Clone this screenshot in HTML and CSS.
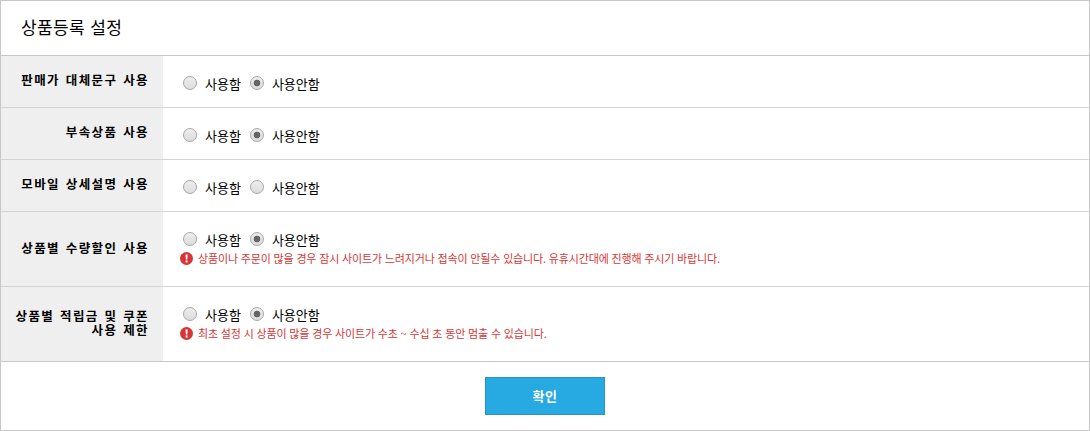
FILE: index.html
```html
<!DOCTYPE html>
<html lang="ko">
<head>
    <meta charset="UTF-8">
    <meta name="viewport" content="width=device-width, initial-scale=1.0">
    <title>상품등록 설정</title>
    <link rel="stylesheet" href="styles.css">
</head>
<body>
    <form class="setting">
        <h1>상품등록 설정</h1>
        <div class="row">
            <div class="name"><span class="text">판매가 대체문구 사용</span></div>
            <div class="value">
                <div class="radios">
                    <label><input type="radio" name="price_text" value="Y"><span>사용함</span></label>
                    <label><input type="radio" name="price_text" value="N" checked><span>사용안함</span></label>
                </div>
            </div>
        </div>
        <div class="row">
            <div class="name"><span class="text">부속상품 사용</span></div>
            <div class="value">
                <div class="radios">
                    <label><input type="radio" name="sub_goods" value="Y"><span>사용함</span></label>
                    <label><input type="radio" name="sub_goods" value="N" checked><span>사용안함</span></label>
                </div>
            </div>
        </div>
        <div class="row">
            <div class="name"><span class="text">모바일 상세설명 사용</span></div>
            <div class="value">
                <div class="radios">
                    <label><input type="radio" name="mobile_desc" value="Y"><span>사용함</span></label>
                    <label><input type="radio" name="mobile_desc" value="N"><span>사용안함</span></label>
                </div>
            </div>
        </div>
        <div class="row tall">
            <div class="name"><span class="text">상품별 수량할인 사용</span></div>
            <div class="value">
                <div class="radios">
                    <label><input type="radio" name="qty_sale" value="Y"><span>사용함</span></label>
                    <label><input type="radio" name="qty_sale" value="N" checked><span>사용안함</span></label>
                </div>
                <p class="notice">
                    <svg width="13" height="13" viewBox="0 0 13 13"><circle cx="6.5" cy="6.5" r="6.5" fill="#d63636"/><path d="M5.5 2.5h2.2l-.4 5H5.9zM5.6 8.6h2v2h-2z" fill="#fff"/></svg>
                    <span>상품이나 주문이 많을 경우 잠시 사이트가 느려지거나 접속이 안될수 있습니다. 유휴시간대에 진행해 주시기 바랍니다.</span>
                </p>
            </div>
        </div>
        <div class="row tall">
            <div class="name"><span class="text">상품별 적립금 및 쿠폰<br>사용 제한</span></div>
            <div class="value">
                <div class="radios">
                    <label><input type="radio" name="point_limit" value="Y"><span>사용함</span></label>
                    <label><input type="radio" name="point_limit" value="N" checked><span>사용안함</span></label>
                </div>
                <p class="notice">
                    <svg width="13" height="13" viewBox="0 0 13 13"><circle cx="6.5" cy="6.5" r="6.5" fill="#d63636"/><path d="M5.5 2.5h2.2l-.4 5H5.9zM5.6 8.6h2v2h-2z" fill="#fff"/></svg>
                    <span>최초 설정 시 상품이 많을 경우 사이트가 수초 ~ 수십 초 동안 멈출 수 있습니다.</span>
                </p>
            </div>
        </div>
        <div class="buttons">
            <button type="submit">확인</button>
        </div>
    </form>
</body>
</html>
```
FILE: styles.css
```css
* {
    box-sizing: border-box;
}
body {
    margin: 0;
    font-family: "Noto Sans CJK KR", sans-serif;
    font-size: 13px;
    color: #000;
    background: #fff;
}
.setting {
    height: 431px;
    border: 1px solid #c8c8c8;
    overflow: hidden;
    white-space: nowrap;
}
h1 {
    height: 55px;
    margin: 0;
    padding-left: 20px;
    border-bottom: 1px solid #c8c8c8;
    font-size: 17px;
    font-weight: 400;
    line-height: 52px;
    letter-spacing: 0.4px;
}
.row {
    display: flex;
    height: 52px;
    border-bottom: 1px solid #d4d4d4;
}
.row.tall {
    height: 75px;
}
.row.tall + .row.tall {
    border-color: #c8c8c8;
}
.name {
    display: flex;
    align-items: center;
    justify-content: flex-end;
    width: 162px;
    padding: 0 14px 4px 0;
    background: #efefef;
}
.tall .name {
    padding-bottom: 2px;
}
.name .text {
    font-size: 12.5px;
    font-weight: 700;
    line-height: 14px;
    letter-spacing: 1.4px;
    word-spacing: 0.9px;
    text-align: right;
}
.value {
    padding: 19px 0 0 17px;
}
.radios {
    display: flex;
    gap: 9px;
    height: 16px;
    padding-left: 3px;
}
.radios label {
    display: flex;
    align-items: center;
}
.radios input {
    appearance: none;
    width: 14px;
    height: 14px;
    margin: 0;
    border: 1px solid #a8a8a8;
    border-radius: 50%;
    background: linear-gradient(#eee, #dcdcdc);
}
.radios input:checked {
    background: radial-gradient(circle, #666 3px, transparent 3.7px), linear-gradient(#eee, #dcdcdc);
}
.radios span {
    margin: 1px 0 0 8px;
    line-height: 15px;
}
.notice {
    display: flex;
    align-items: center;
    gap: 5px;
    height: 13px;
    margin: 5px 0 0;
    color: #d63636;
    font-size: 11px;
    line-height: 13px;
    letter-spacing: -0.16px;
}
.buttons {
    display: flex;
    justify-content: center;
    padding-top: 15px;
}
button {
    width: 120px;
    height: 38px;
    padding: 0;
    border: 1px solid #2b8fd3;
    background: #27aae1;
    color: #fff;
    font: 700 13px/34px "Noto Sans CJK KR", sans-serif;
    letter-spacing: 0.5px;
}
```
